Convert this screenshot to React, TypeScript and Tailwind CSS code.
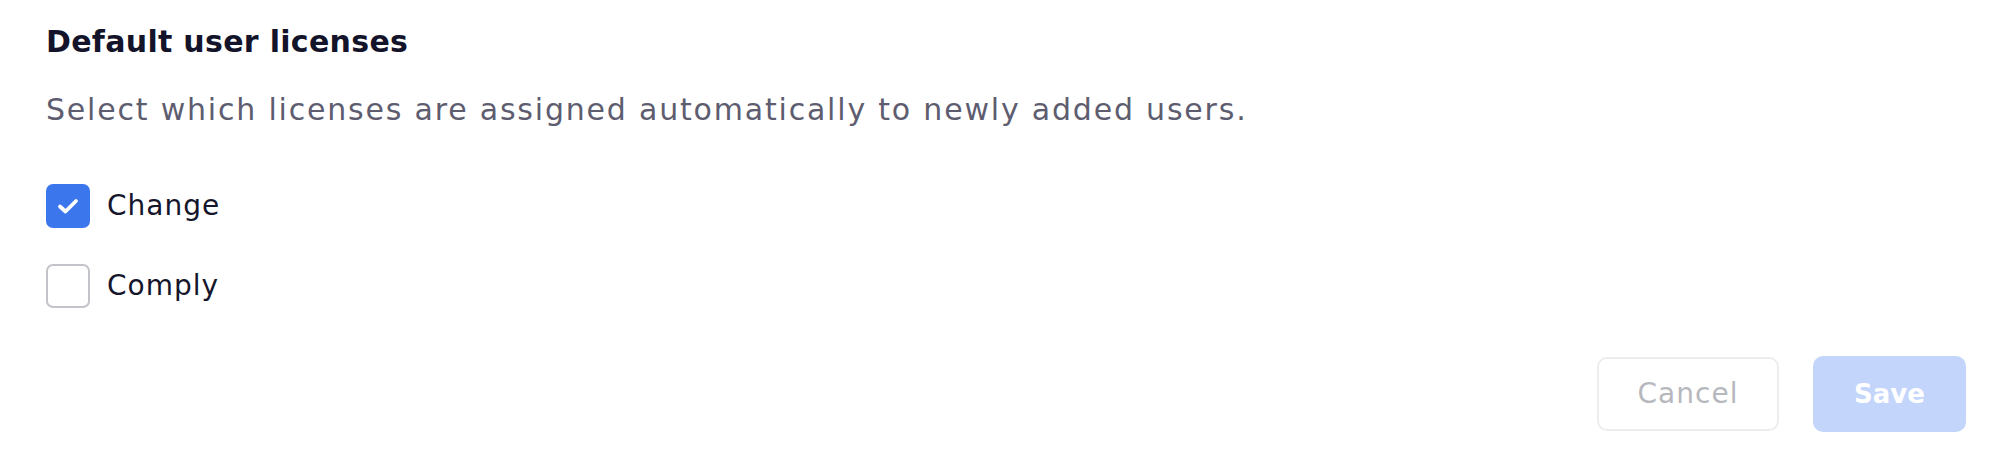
import { useState } from "react";

function Checkbox({
  label,
  checked,
  onToggle,
}: {
  label: string;
  checked: boolean;
  onToggle: () => void;
}) {
  return (
    <button type="button" onClick={onToggle} className="flex h-[44px] items-center gap-[17px] text-left">
      {checked ? (
        <span className="flex h-[44px] w-[44px] items-center justify-center rounded-[7px] bg-[#3b76ed]">
          <svg width="22" height="18" viewBox="0 0 22 18" fill="none">
            <path
              d="M3 9.5l5.5 5L19 4"
              stroke="white"
              strokeWidth="3.8"
              strokeLinecap="round"
              strokeLinejoin="round"
            />
          </svg>
        </span>
      ) : (
        <span className="h-[44px] w-[44px] rounded-[7px] border-2 border-[#c3c3c9] bg-white" />
      )}
      <span className="text-[28px] leading-[36px] tracking-[1px] text-[#15152b]">{label}</span>
    </button>
  );
}

export default function App() {
  const [change, setChange] = useState(true);
  const [comply, setComply] = useState(false);

  return (
    <div className="h-[468px] w-full bg-white pl-[46px] pr-[28px] pt-[24px] font-['DejaVu_Sans',sans-serif]">
      <h2 className="text-[30px] font-bold leading-[36px] tracking-[0.3px] text-[#13132a]">
        Default user licenses
      </h2>
      <p className="mt-[32px] text-[30px] leading-[36px] tracking-[1.8px] text-[#5e5d70]">
        Select which licenses are assigned automatically to newly added users.
      </p>
      <div className="mt-[56px] flex flex-col items-start gap-[36px]">
        <Checkbox label="Change" checked={change} onToggle={() => setChange(!change)} />
        <Checkbox label="Comply" checked={comply} onToggle={() => setComply(!comply)} />
      </div>
      <div className="mt-[48px] flex items-center justify-end gap-[34px]">
        <button className="h-[74px] w-[182px] rounded-[10px] border-2 border-[#ededf0] bg-white text-[28px] tracking-[1px] text-[#b7b7be]">
          Cancel
        </button>
        <button className="h-[76px] w-[153px] rounded-[10px] bg-[#c3d5fa] text-[26px] font-bold text-white">
          Save
        </button>
      </div>
    </div>
  );
}
